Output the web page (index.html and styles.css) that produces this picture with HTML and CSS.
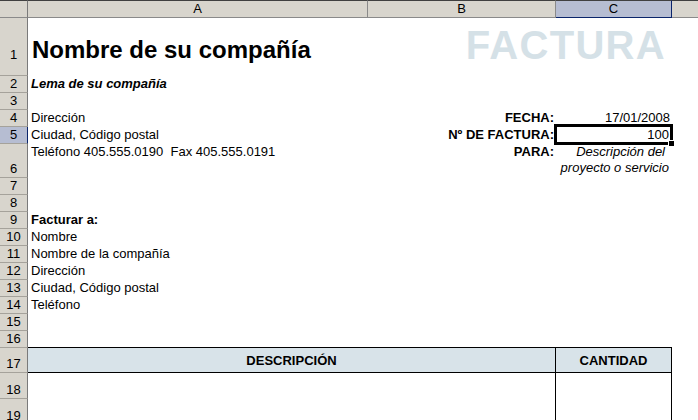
FILE: index.html
```html
<!DOCTYPE html>
<html lang="es">
<head>
<meta charset="utf-8">
<title>Factura</title>
<link rel="stylesheet" href="styles.css">
</head>
<body>
<div class="sheet">
  <div class="hd corner"></div>
  <div class="hd col">A</div>
  <div class="hd col">B</div>
  <div class="hd col sel-col">C</div>
  <div class="hd col last">&nbsp;</div>

  <div class="rh r1 rh1">1</div>
  <div class="rh r2">2</div>
  <div class="rh r3">3</div>
  <div class="rh r4">4</div>
  <div class="rh r5 sel-row">5</div>
  <div class="rh r6">6</div>
  <div class="rh r7">7</div>
  <div class="rh r8">8</div>
  <div class="rh r9">9</div>
  <div class="rh r10">10</div>
  <div class="rh r11">11</div>
  <div class="rh r12">12</div>
  <div class="rh r13">13</div>
  <div class="rh r14">14</div>
  <div class="rh r15">15</div>
  <div class="rh r16">16</div>
  <div class="rh r17">17</div>
  <div class="rh r18">18</div>
  <div class="rh r19">19</div>

  <div class="cell r1 cA title">Nombre de su compañía</div>
  <div class="cell r1 cBC right factura">FACTURA</div>
  <div class="cell r2 cA bi">Lema de su compañía</div>
  <div class="cell r4 cA">Dirección</div>
  <div class="cell r4 cB right b">FECHA:</div>
  <div class="cell r4 cC right">17/01/2008</div>
  <div class="cell r5 cA">Ciudad, Código postal</div>
  <div class="cell r5 cB right b">Nº DE FACTURA:</div>
  <div class="cell r5 cC right active">100</div>
  <div class="cell r6 cA top">Teléfono 405.555.0190&nbsp; Fax 405.555.0191</div>
  <div class="cell r6 cB right b top">PARA:</div>
  <div class="cell r6 cC right it wrap"><span class="line trail">Descripción del</span><span class="line">proyecto o servicio</span></div>
  <div class="cell r9 cA b">Facturar a:</div>
  <div class="cell r10 cA">Nombre</div>
  <div class="cell r11 cA">Nombre de la compañía</div>
  <div class="cell r12 cA">Dirección</div>
  <div class="cell r13 cA">Ciudad, Código postal</div>
  <div class="cell r14 cA">Teléfono</div>

  <div class="th r17 cAB">DESCRIPCIÓN</div>
  <div class="th r17 cC">CANTIDAD</div>
  <div class="td r18 cAB"></div>
  <div class="td r18 cC"></div>
  <div class="td r19 cAB"></div>
  <div class="td r19 cC"></div>
</div>
</body>
</html>
```

FILE: styles.css
```css
html, body {
  margin: 0;
  padding: 0;
  background: #ffffff;
  overflow: hidden;
}

body {
  width: 698px;
  height: 420px;
  font-family: "Liberation Sans", Arial, sans-serif;
  font-size: 13px;
  color: #000;
}

.sheet {
  display: grid;
  grid-template-columns: 28px 340px 188px 116px 1fr;
  grid-template-rows: 18px 58px 17px 17px 17px 17px 34px repeat(10, 17px) 25px 26px 26px;
  width: 698px;
}

/* headers */
.hd {
  grid-row: 1;
  background: #d8d5cd;
  border-top: 1px solid #404040;
  border-bottom: 1px solid #8a8a8a;
  border-right: 1px solid #8a8a8a;
  box-sizing: border-box;
  text-align: center;
  line-height: 16px;
  font-size: 13px;
}
.corner { grid-column: 1; border-right-color: #7a7a7a; }
.col.last { border-right: none; }
.sel-col {
  background: #b6bdd2;
  border-bottom-color: #0a246a;
  border-right-color: #0a246a;
}

.rh {
  grid-column: 1;
  background: #d8d5cd;
  border-bottom: 1px solid #a5a29b;
  border-right: 1px solid #7a7a7a;
  box-sizing: border-box;
  display: flex;
  align-items: flex-end;
  justify-content: center;
  line-height: 15px;
  padding-bottom: 1px;
}
.rh1 { padding-bottom: 13px; }
.sel-row {
  background: #b6bdd2;
  border-right-color: #0a246a;
}

/* row placement */
.r1 { grid-row: 2; }
.r2 { grid-row: 3; }
.r3 { grid-row: 4; }
.r4 { grid-row: 5; }
.r5 { grid-row: 6; }
.r6 { grid-row: 7; }
.r7 { grid-row: 8; }
.r8 { grid-row: 9; }
.r9 { grid-row: 10; }
.r10 { grid-row: 11; }
.r11 { grid-row: 12; }
.r12 { grid-row: 13; }
.r13 { grid-row: 14; }
.r14 { grid-row: 15; }
.r15 { grid-row: 16; }
.r16 { grid-row: 17; }
.r17 { grid-row: 18; }
.r18 { grid-row: 19; }
.r19 { grid-row: 20; }

/* column placement */
.cA { grid-column: 2; }
.cB { grid-column: 3; }
.cC { grid-column: 4; }
.cAB { grid-column: 2 / 4; }
.cBC { grid-column: 3 / 5; }

/* cells */
.cell {
  display: flex;
  align-items: flex-end;
  line-height: 15px;
  padding: 0 2px 2px 3px;
  white-space: nowrap;
  box-sizing: border-box;
  min-width: 0;
}
.right { justify-content: flex-end; padding-right: 2px; }
.b { font-weight: bold; }
.bi { font-weight: bold; font-style: italic; }
.it { font-style: italic; }
.top { align-items: flex-start; line-height: 16px; padding-top: 0; }

.title {
  font-size: 24px;
  font-weight: bold;
  line-height: 24px;
  padding-left: 4px;
  padding-bottom: 14px;
}
.factura {
  font-size: 40px;
  font-weight: bold;
  line-height: 40px;
  letter-spacing: 1.3px;
  color: #d5e1e7;
  padding-right: 6px;
  padding-bottom: 11px;
}

.wrap {
  flex-direction: column;
  align-items: flex-end;
  justify-content: flex-start;
  line-height: 16px;
  padding-right: 3px;
}
.line { display: block; }
.trail { padding-right: 4px; }

.active {
  position: relative;
  margin: -3px -1px -1px -2px;
  border: 3px solid #000;
  padding: 0 1px 0 0;
  align-items: center;
  line-height: 13px;
}
.active::after {
  content: "";
  position: absolute;
  right: -5px;
  bottom: -5px;
  width: 5px;
  height: 5px;
  background: #000;
  border: 1px solid #fff;
}

/* table */
.th {
  margin-top: -1px;
  background: #d8e3e9;
  border-top: 1px solid #000;
  border-bottom: 1px solid #000;
  border-right: 1px solid #000;
  box-sizing: border-box;
  font-weight: bold;
  text-align: center;
  display: flex;
  align-items: center;
  justify-content: center;
  line-height: 15px;
  padding-bottom: 0;
}
.td {
  border-right: 1px solid #000;
  box-sizing: border-box;
}
```
